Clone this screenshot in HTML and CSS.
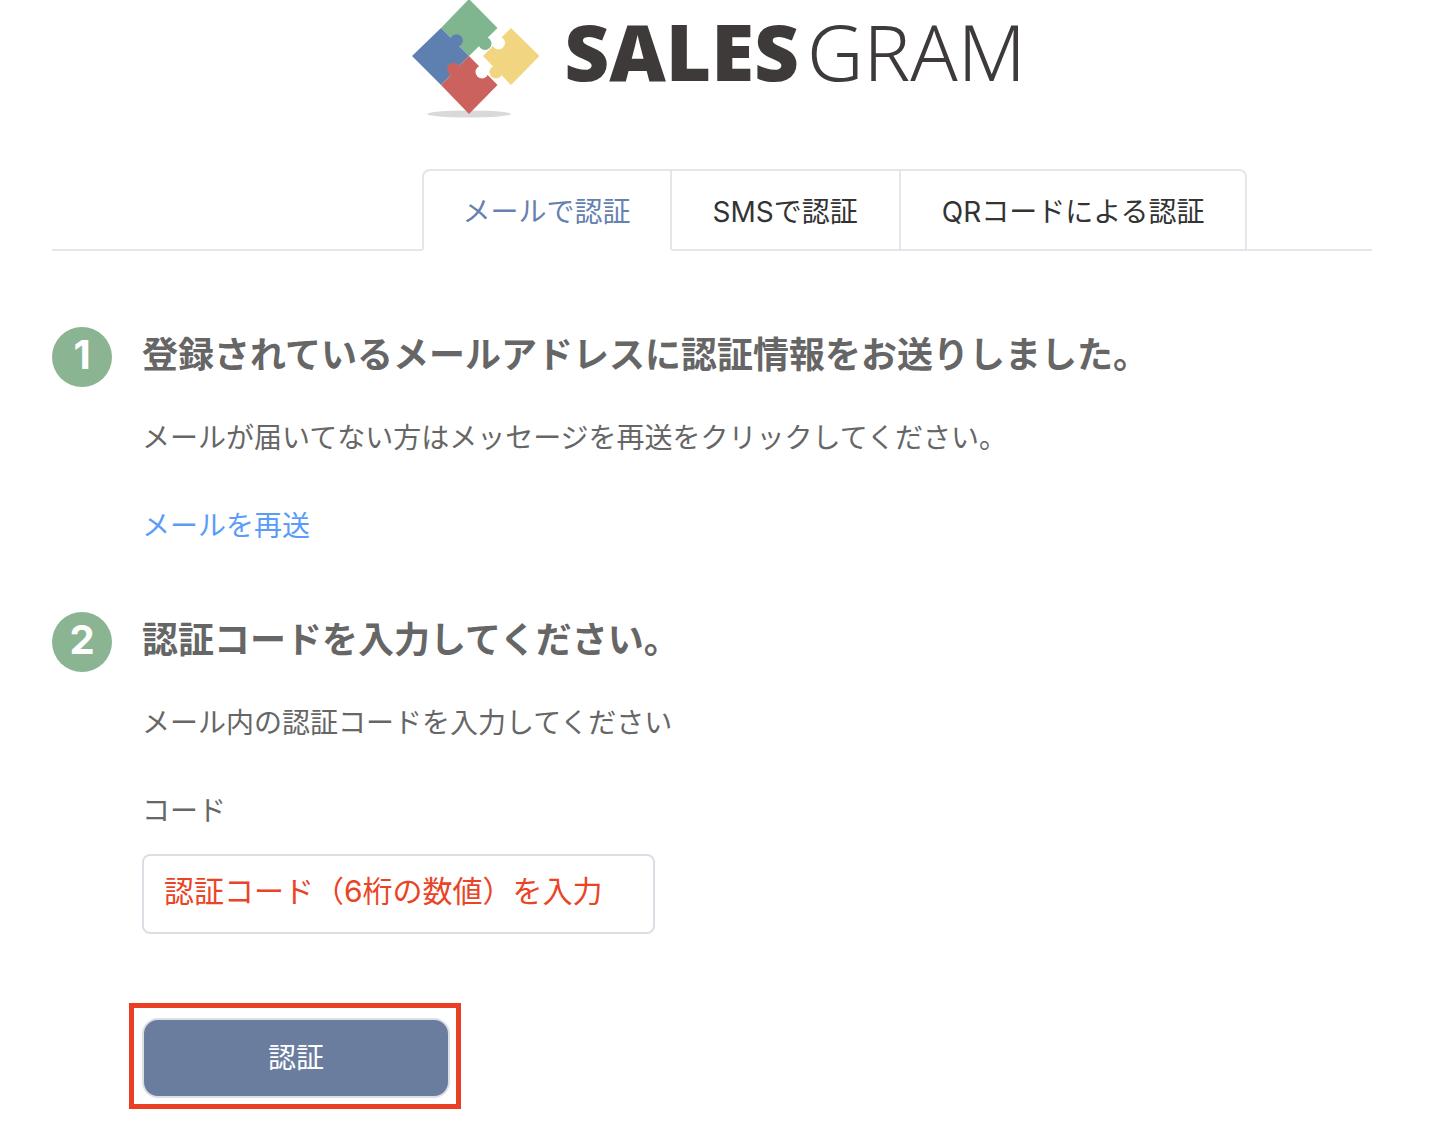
FILE: index.html
```html
<!DOCTYPE html>
<html lang="ja">
  <head>
    <meta charset="UTF-8" />
    <meta name="viewport" content="width=device-width, initial-scale=1.0" />
    <title>認証 - SALESGRAM</title>

    <link rel="stylesheet" href="styles.css">
  </head>
  <body>
    <div class="container">
      <!-- Logo -->
      <header class="logo">
        <svg class="logo-mark" viewBox="0 0 128 118" aria-hidden="true">
          <ellipse cx="57" cy="114" rx="42" ry="3.5" fill="#d9d9d9" />
          <g fill="#80b68f">
            <path d="M57-1 85.500 28 57 56 29 28z" />
            <circle cx="73" cy="43.500" r="6.500" />
          </g>
          <g fill="#5e80b0">
            <path d="M29 28 57 56 29 85 0 56z" />
            <circle cx="44.500" cy="40.500" r="6.300" />
          </g>
          <g fill="#cc625d">
            <path d="M57 56 85.500 85 57 114 29 85z" />
            <circle cx="41.500" cy="69" r="6.300" />
          </g>
          <circle cx="70" cy="72" r="6.500" fill="#fff" />
          <g fill="#f1d580">
            <path d="M99 28 127.500 56 99 85 71 56z" />
            <circle cx="84" cy="72" r="6.500" />
          </g>
          <circle cx="86.500" cy="43" r="6.500" fill="#fff" />
        </svg>
        <span class="logo-text"><b>SALES</b>GRAM</span>
      </header>

      <!-- Tabs -->
      <nav class="tabs">
        <a href="#mail" class="tab active">メールで認証</a>
        <a href="#sms" class="tab">SMSで認証</a>
        <a href="#qr" class="tab">QRコードによる認証</a>
      </nav>

      <!-- Step 1 -->
      <section class="step">
        <span class="step-number">1</span>
        <div class="step-body">
          <h2>登録されているメールアドレスに認証情報をお送りしました。</h2>
          <p>メールが届いてない方はメッセージを再送をクリックしてください。</p>
          <a href="#resend" class="resend-link">メールを再送</a>
        </div>
      </section>

      <!-- Step 2 -->
      <section class="step">
        <span class="step-number">2</span>
        <div class="step-body">
          <h2>認証コードを入力してください。</h2>
          <p>メール内の認証コードを入力してください</p>
          <form>
            <label for="code">コード</label>
            <input
              type="text"
              id="code"
              class="input-field"
              placeholder="認証コード（6桁の数値）を入力"
            />
            <div class="button-frame">
              <button type="submit" class="submit-button">認証</button>
            </div>
          </form>
        </div>
      </section>
    </div>
  </body>
</html>
```
FILE: styles.css
```css
* {
  box-sizing: border-box;
}

body {
  font-family: Inter, "Noto Sans CJK JP", sans-serif;
  font-size: 28px;
  line-height: 44px;
  margin: 0;
  color: #666;
  background-color: #fff;
}

.container {
  margin: 0 60px 32px 52px;
}

.logo {
  display: flex;
  justify-content: center;
  gap: 24px;
  height: 118px;
  padding-left: 14px;
}

.logo-mark {
  width: 128px;
  height: 118px;
}

.logo-text {
  font-family: "Noto Sans", sans-serif;
  font-size: 78px;
  font-weight: 300;
  line-height: 102px;
  color: #3e3a39;
}

.logo-text b {
  margin-right: 8px;
  font-weight: 900;
}

.tabs {
  display: flex;
  margin-top: 51px;
  padding-left: 28%;
  border-bottom: 2px solid #e5e5ec;
}

.tab {
  margin-bottom: -2px;
  padding: 19px 41px 15px;
  border: 2px solid #e5e5ec;
  border-left: none;
  color: #333;
  text-decoration: none;
  white-space: nowrap;
}

.tab:first-child {
  border-left: 2px solid #e5e5ec;
  border-top-left-radius: 8px;
}

.tab:last-child {
  border-top-right-radius: 8px;
}

.tab.active {
  padding-left: 39px;
  padding-right: 39px;
  color: #6681af;
  border-bottom-color: #fff;
}

.step {
  display: flex;
  gap: 30px;
  margin-top: 64px;
}

.tabs + .step {
  margin-top: 76px;
}

.step-number {
  flex: none;
  width: 60px;
  height: 60px;
  border-radius: 50%;
  background-color: #8bb592;
  color: #fff;
  font-size: 40px;
  font-weight: bold;
  line-height: 56px;
  text-align: center;
}

.step-body {
  flex: 1;
}

.step h2 {
  margin: 0 0 33px;
  font-size: 36px;
  font-weight: bold;
  line-height: 56px;
}

.step p {
  margin: 0 0 44px;
}

.resend-link {
  display: block;
  color: #5a9cf8;
  text-decoration: none;
}

label {
  display: block;
  margin-bottom: 21px;
}

.input-field {
  display: block;
  width: 100%;
  max-width: 513px;
  height: 80px;
  padding: 0 20px 6px;
  border: 2px solid #dcdee5;
  border-radius: 8px;
  font-family: inherit;
  font-size: 30px;
}

.input-field::placeholder {
  color: #ea4426;
  opacity: 1;
}

.button-frame {
  width: 332px;
  margin: 69px 0 0 -13px;
  padding: 10px 6px 6px 8px;
  border: 5px solid #e93f24;
}

.submit-button {
  display: block;
  width: 100%;
  height: 80px;
  padding: 0 0 4px;
  border: 2px solid #dcdfe6;
  border-radius: 16px;
  background-color: #6a7d9f;
  color: #fff;
  font-family: inherit;
  font-size: 28px;
  cursor: pointer;
}
```
